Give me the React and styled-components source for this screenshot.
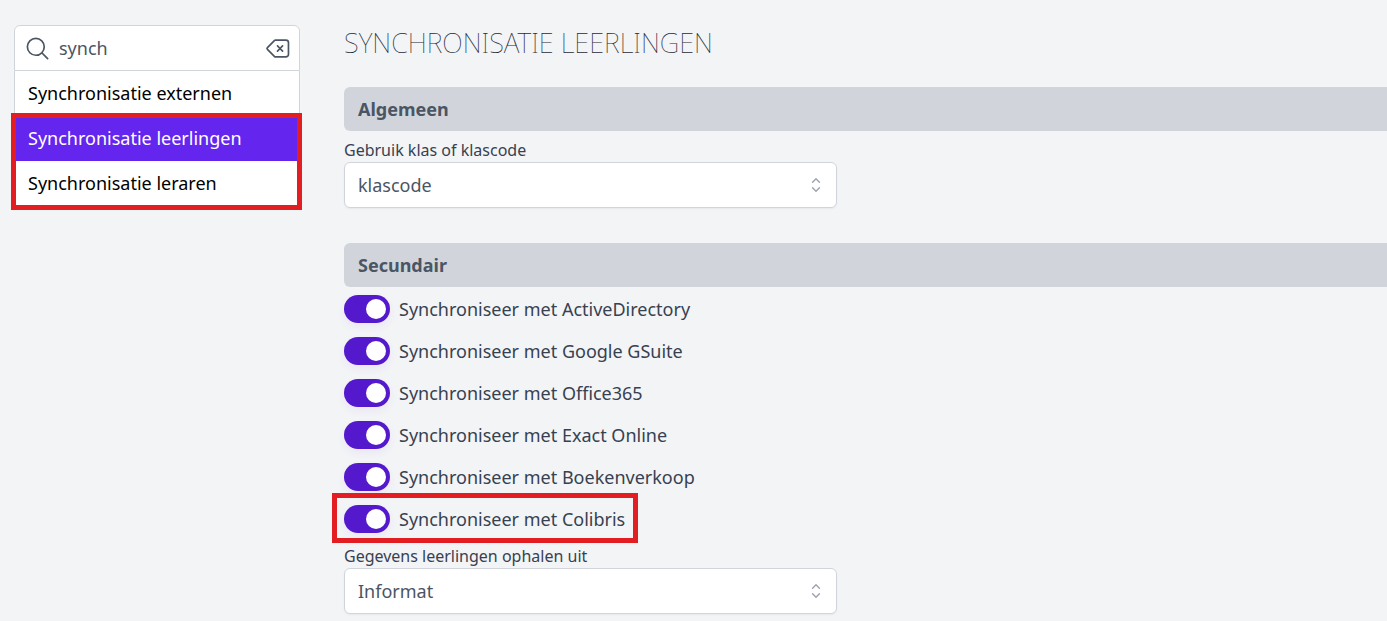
import React, { useState } from 'react';
import styled, { createGlobalStyle, css } from 'styled-components';

const GlobalStyle = createGlobalStyle`
  *, *::before, *::after { box-sizing: border-box; }
  body {
    margin: 0;
    background: #f3f4f6;
    color: #374151;
    font-family: 'Noto Sans', 'Open Sans', sans-serif;
    font-size: 18px;
    line-height: 28px;
    overflow-x: hidden;
  }
  button, input, select { font: inherit; }
`;

const Page = styled.div`
  display: flex;
  align-items: flex-start;
  gap: 44px;
  padding-left: 14px;
`;

const Sidebar = styled.nav`
  flex: 0 0 286px;
  min-width: 0;
  margin-top: 25px;
`;

const SearchBox = styled.div`
  display: flex;
  align-items: center;
  height: 46px;
  padding: 0 8px 0 9px;
  gap: 8px;
  background: #fff;
  border: 1px solid #d1d5db;
  border-radius: 6px 6px 0 0;
  color: #4b5563;
`;

const SearchInput = styled.input`
  flex: 1;
  min-width: 0;
  padding: 0;
  border: 0;
  outline: 0;
  background: transparent;
  color: #4b5563;
`;

const ClearButton = styled.button`
  display: flex;
  padding: 0;
  border: 0;
  background: none;
  color: inherit;
  cursor: pointer;
`;

const Icon = styled.svg`
  flex: none;
  width: 27px;
  height: 27px;
  fill: none;
  stroke: currentColor;
  stroke-width: 1.5;
  stroke-linecap: round;
  stroke-linejoin: round;
`;

const Results = styled.div`
  background: #fff;
  border: 1px solid #d1d5db;
  border-top: 0;
`;

const ResultLink = styled.a`
  display: block;
  padding: 8px 13px 9px;
  color: ${(p) => (p.$active ? '#fff' : '#000')};
  background: ${(p) => (p.$active ? '#6425ee' : '#fff')};
  text-decoration: none;
`;

const marked = css`
  position: relative;
  &::after {
    content: '';
    position: absolute;
    border: 5px solid #e31e22;
    pointer-events: none;
  }
`;

const MarkedResults = styled.div`
  ${marked}
  &::after { inset: -3px -3px -4px -4px; }
`;

const Main = styled.main`
  flex: 1;
  min-width: 0;
`;

const Title = styled.h1`
  margin: 25px 0 26px;
  font-size: 27px;
  font-weight: 100;
  line-height: 36px;
  text-transform: uppercase;
  color: #1f2937;
`;

const Section = styled.section`
  margin-bottom: 35px;
`;

const SectionTitle = styled.h2`
  margin: 0;
  padding: 8px 14px;
  border-radius: 6px 0 0 6px;
  background: #d1d5db;
  color: #4b5563;
  font-size: 18px;
  font-weight: 700;
`;

const Field = styled.div`
  max-width: 493px;
  padding-top: 9px;
`;

const FieldLabel = styled.label`
  display: block;
  padding-bottom: 2px;
  font-size: 16px;
  line-height: 20px;
`;

const SelectWrap = styled.div`
  position: relative;
  color: #9ca3af;
  ${Icon} {
    position: absolute;
    top: 12px;
    right: 10px;
    width: 22px;
    height: 22px;
    pointer-events: none;
  }
`;

const Select = styled.select`
  display: block;
  width: 100%;
  height: 46px;
  padding: 0 40px 0 13px;
  appearance: none;
  border: 1px solid #d1d5db;
  border-radius: 6px;
  background: #fff;
  box-shadow: 0 1px 2px rgba(0, 0, 0, 0.05);
  color: #4b5563;
`;

const ToggleList = styled.div`
  display: flex;
  flex-direction: column;
  align-items: flex-start;
  gap: 14px;
  padding: 8px 0 4px;
`;

const ToggleRow = styled.label`
  display: flex;
  align-items: center;
  gap: 9px;
  height: 28px;
  cursor: pointer;
  ${(p) => p.$marked && css`
    ${marked}
    &::after { inset: -12px -13px -10px -12px; }
  `}
`;

const Switch = styled.input`
  display: flex;
  align-items: center;
  width: 46px;
  height: 28px;
  margin: 0;
  padding: 0 4px;
  appearance: none;
  border-radius: 14px;
  background: #9ca3af;
  box-shadow: 0 4px 8px rgba(88, 28, 205, 0.06);
  cursor: pointer;
  &::before {
    content: '';
    width: 20px;
    height: 20px;
    border-radius: 50%;
    background: #fff;
  }
  &:checked {
    justify-content: flex-end;
    background: #5519cd;
  }
`;

const services = ['ActiveDirectory', 'Google GSuite', 'Office365', 'Exact Online', 'Boekenverkoop', 'Colibris'];

function SelectField({ id, label, options }) {
  return (
    <Field>
      <FieldLabel htmlFor={id}>{label}</FieldLabel>
      <SelectWrap>
        <Select id={id}>
          {options.map((o) => <option key={o}>{o}</option>)}
        </Select>
        <Icon viewBox="0 0 24 24" aria-hidden="true">
          <path d="M8.25 15 12 18.75 15.75 15m-7.5-6L12 5.25 15.75 9" />
        </Icon>
      </SelectWrap>
    </Field>
  );
}

export default function App() {
  const [query, setQuery] = useState('synch');
  return (
    <>
      <GlobalStyle />
      <Page>
        <Sidebar>
          <SearchBox>
            <Icon viewBox="0 0 24 24" aria-hidden="true">
              <path d="m21 21-5.197-5.197m0 0A7.5 7.5 0 1 0 5.196 5.196a7.5 7.5 0 0 0 10.607 10.607Z" />
            </Icon>
            <SearchInput aria-label="Zoeken" value={query} onChange={(e) => setQuery(e.target.value)} />
            <ClearButton type="button" aria-label="Wissen" onClick={() => setQuery('')}>
              <Icon viewBox="0 0 24 24" aria-hidden="true">
                <path d="M12 9.75 14.25 12m0 0 2.25 2.25M14.25 12l2.25-2.25M14.25 12 12 14.25m-2.58 4.92-6.374-6.375a1.125 1.125 0 0 1 0-1.59L9.42 4.83c.21-.211.497-.33.795-.33H19.5a2.25 2.25 0 0 1 2.25 2.25v10.5a2.25 2.25 0 0 1-2.25 2.25h-9.284c-.298 0-.585-.119-.796-.33Z" />
              </Icon>
            </ClearButton>
          </SearchBox>
          <Results>
            <ResultLink href="#externen">Synchronisatie externen</ResultLink>
            <MarkedResults>
              <ResultLink href="#leerlingen" $active aria-current="page">Synchronisatie leerlingen</ResultLink>
              <ResultLink href="#leraren">Synchronisatie leraren</ResultLink>
            </MarkedResults>
          </Results>
        </Sidebar>
        <Main>
          <Title>Synchronisatie leerlingen</Title>
          <Section>
            <SectionTitle>Algemeen</SectionTitle>
            <SelectField id="klas" label="Gebruik klas of klascode" options={['klascode', 'klas']} />
          </Section>
          <Section>
            <SectionTitle>Secundair</SectionTitle>
            <ToggleList>
              {services.map((name) => (
                <ToggleRow key={name} $marked={name === 'Colibris'}>
                  <Switch type="checkbox" role="switch" defaultChecked />
                  Synchroniseer met {name}
                </ToggleRow>
              ))}
            </ToggleList>
            <SelectField id="bron" label="Gegevens leerlingen ophalen uit" options={['Informat']} />
          </Section>
        </Main>
      </Page>
    </>
  );
}
